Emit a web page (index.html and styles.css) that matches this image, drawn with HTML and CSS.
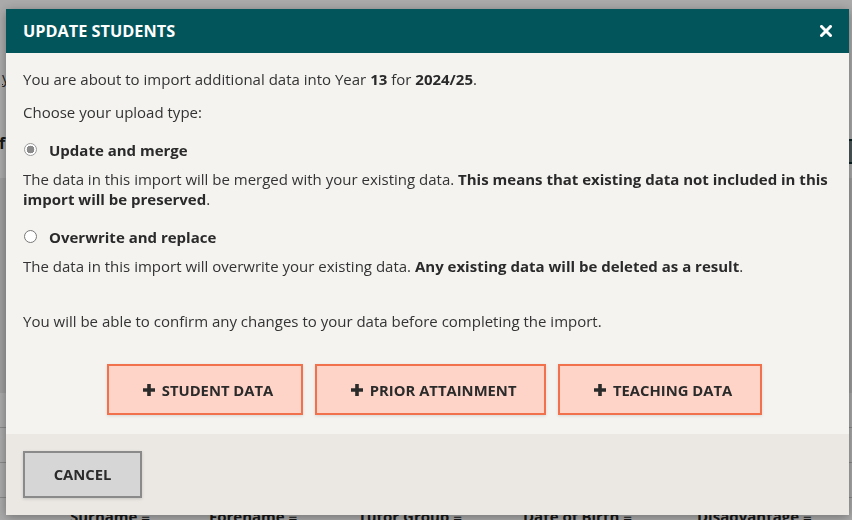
FILE: index.html
```html
<!DOCTYPE html>
<html lang="en">
<head>
<meta charset="utf-8">
<title>Update Students</title>
<link rel="stylesheet" href="styles.css">
</head>
<body>
<div class="page">
  <div class="page-top"></div>
  <a class="page-link" href="#">you can view your data</a>
  <div class="page-toolbar">
    <h3 class="page-heading">filters</h3>
    <div class="toolbar-bar"></div>
  </div>
  <div class="page-panel"></div>
  <div class="page-rows">
    <div class="page-row"></div>
    <div class="page-row"></div>
    <div class="page-row"></div>
  </div>
  <div class="table-head">
    <span class="th th-surname">Surname <span class="menu">&#8801;</span></span>
    <span class="th th-forename">Forename <span class="menu">&#8801;</span></span>
    <span class="th th-tutor">Tutor Group <span class="menu">&#8801;</span></span>
    <span class="th th-dob">Date of Birth <span class="menu">&#8801;</span></span>
    <span class="th th-dis">Disadvantage <span class="menu">&#8801;</span></span>
  </div>
</div>

<div class="backdrop"></div>

<div class="modal" role="dialog" aria-labelledby="modal-title">
  <header class="modal-header">
    <h2 id="modal-title" class="modal-title">UPDATE STUDENTS</h2>
    <button class="modal-close" aria-label="Close">
      <svg width="12" height="12" viewBox="0 0 12 12"><path d="M1.5 1.5 L10.5 10.5 M10.5 1.5 L1.5 10.5" stroke="#fff" stroke-width="3" stroke-linecap="square" fill="none"/></svg>
    </button>
  </header>

  <div class="modal-body">
    <p class="intro">You are about to import additional data into Year <strong>13</strong> for <strong>2024/25</strong>.</p>
    <p class="choose">Choose your upload type:</p>

    <label class="option option-first">
      <input type="radio" name="mode" class="radio" checked>
      <span class="option-label">Update and merge</span>
    </label>
    <p class="option-desc">The data in this import will be merged with your existing data. <strong>This means that existing data not included in this import will be preserved</strong>.</p>

    <label class="option">
      <input type="radio" name="mode" class="radio">
      <span class="option-label">Overwrite and replace</span>
    </label>
    <p class="option-desc">The data in this import will overwrite your existing data. <strong>Any existing data will be deleted as a result</strong>.</p>

    <p class="confirm">You will be able to confirm any changes to your data before completing the import.</p>

    <div class="actions">
      <button class="btn-add">
        <svg class="plus" width="12" height="12" viewBox="0 0 12 12"><path d="M6 0 V12 M0 6 H12" stroke="#2b2b2b" stroke-width="3.6" fill="none"/></svg>
        <span>STUDENT DATA</span>
      </button>
      <button class="btn-add">
        <svg class="plus" width="12" height="12" viewBox="0 0 12 12"><path d="M6 0 V12 M0 6 H12" stroke="#2b2b2b" stroke-width="3.6" fill="none"/></svg>
        <span>PRIOR ATTAINMENT</span>
      </button>
      <button class="btn-add">
        <svg class="plus" width="12" height="12" viewBox="0 0 12 12"><path d="M6 0 V12 M0 6 H12" stroke="#2b2b2b" stroke-width="3.6" fill="none"/></svg>
        <span>TEACHING DATA</span>
      </button>
    </div>
  </div>

  <footer class="modal-footer">
    <button class="btn-cancel">CANCEL</button>
  </footer>
</div>
</body>
</html>
```

FILE: styles.css
```css
* { box-sizing: border-box; }

html, body {
  margin: 0;
  padding: 0;
  width: 852px;
  height: 520px;
  overflow: hidden;
}

body {
  font-family: "Open Sans", "Noto Sans", sans-serif;
  font-size: 15px;
  color: #333;
  background: #f7f7f7;
}

/* ---------- background page ---------- */
.page {
  position: relative;
  height: 520px;
  overflow: hidden;
}
.page-top {
  height: 66px;
}
.page-link {
  display: block;
  margin-left: 2px;
  color: #333;
  font-size: 15px;
  line-height: 22px;
  text-decoration: underline;
  white-space: nowrap;
}
.page-toolbar {
  display: flex;
  align-items: center;
  margin-top: 30px;
  height: 50px;
}
.page-heading {
  margin: 0 0 0 -1px;
  font-size: 16px;
  font-weight: 700;
  color: #222;
  flex: 1;
}
.toolbar-bar {
  width: 60px;
  height: 25px;
  margin-top: 16px;
  background: #6f7f80;
  border-top: 2px solid #0f2f33;
  border-bottom: 2px solid #0f2f33;
}
.page-panel {
  height: 215px;
  margin-top: 10px;
  background: #e6e6e6;
}
.page-rows {
  display: flex;
  flex-direction: column;
}
.page-row {
  height: 35px;
  border-bottom: 1px solid #c8c8c8;
}
.table-head {
  position: absolute;
  left: 0;
  top: 506px;
  width: 852px;
  height: 24px;
  font-weight: 700;
  font-size: 15px;
  color: #222;
  white-space: nowrap;
}
.th { position: absolute; top: 0; }
.th-surname { left: 70px; }
.th-forename { left: 209px; }
.th-tutor { left: 358px; }
.th-dob { left: 523px; }
.th-dis { left: 697px; }
.menu { font-weight: 400; }

.backdrop {
  position: fixed;
  inset: 0;
  background: rgba(0, 0, 0, 0.31);
}

/* ---------- modal ---------- */
.modal {
  position: fixed;
  left: 6px;
  top: 9px;
  width: 843px;
  height: 506px;
  display: flex;
  flex-direction: column;
  background: #f4f3f0;
  box-shadow: 0 2px 10px rgba(0, 0, 0, 0.35);
}

.modal-header {
  height: 44px;
  flex: 0 0 44px;
  display: flex;
  align-items: center;
  justify-content: space-between;
  padding: 0 17px;
  background: #02555b;
}
.modal-title {
  margin: 0;
  font-size: 16.3px;
  font-weight: 700;
  color: #fff;
}
.modal-close {
  border: 0;
  background: none;
  padding: 0;
  width: 12px;
  height: 12px;
  display: flex;
  cursor: pointer;
}

.modal-body {
  flex: 1;
  padding: 16px 17px 0;
  line-height: 20px;
}
.modal-body p { margin: 0; }
.modal-body strong { font-weight: 700; color: #2a2a2a; }

.choose { margin-top: 13px !important; }

.option {
  display: flex;
  align-items: center;
  gap: 12px;
  margin-top: 18px;
  height: 20px;
  padding-left: 1px;
}
.option-label {
  font-weight: 700;
  color: #2a2a2a;
}
.option-desc {
  margin-top: 9px !important;
}

.radio {
  appearance: none;
  -webkit-appearance: none;
  margin: 0;
  width: 13px;
  height: 13px;
  border: 1px solid #767676;
  border-radius: 50%;
  background: #fff;
  position: relative;
  top: -1px;
}
.radio:checked {
  border-color: #9a9a9a;
  background: radial-gradient(circle, #8a8a8a 0 3.6px, #fff 4.1px);
}

.confirm { margin-top: 35px !important; }

.actions {
  display: flex;
  justify-content: center;
  gap: 11.5px;
  margin-top: 33px;
  padding-left: 14px;
}
.btn-add {
  display: flex;
  align-items: center;
  gap: 7px;
  height: 51px;
  padding: 0 28px 0 34px;
  border: 2px solid #f0714b;
  background: #fdd4c7;
  font-family: inherit;
  font-size: 14.8px;
  font-weight: 700;
  color: #2b2b2b;
  box-shadow: 0 1px 3px rgba(0, 0, 0, 0.12);
  cursor: pointer;
}
.plus { flex: none; }

.modal-footer {
  flex: 0 0 81px;
  display: flex;
  align-items: center;
  padding: 0 17px;
  background: #ebe8e3;
}
.btn-cancel {
  width: 119px;
  height: 47px;
  padding: 0 0 2px;
  border: 2px solid #8a8a8a;
  background: #d6d6d6;
  font-family: inherit;
  font-size: 14.8px;
  font-weight: 700;
  color: #2b2b2b;
  box-shadow: 0 1px 3px rgba(0, 0, 0, 0.15);
  cursor: pointer;
}
```
